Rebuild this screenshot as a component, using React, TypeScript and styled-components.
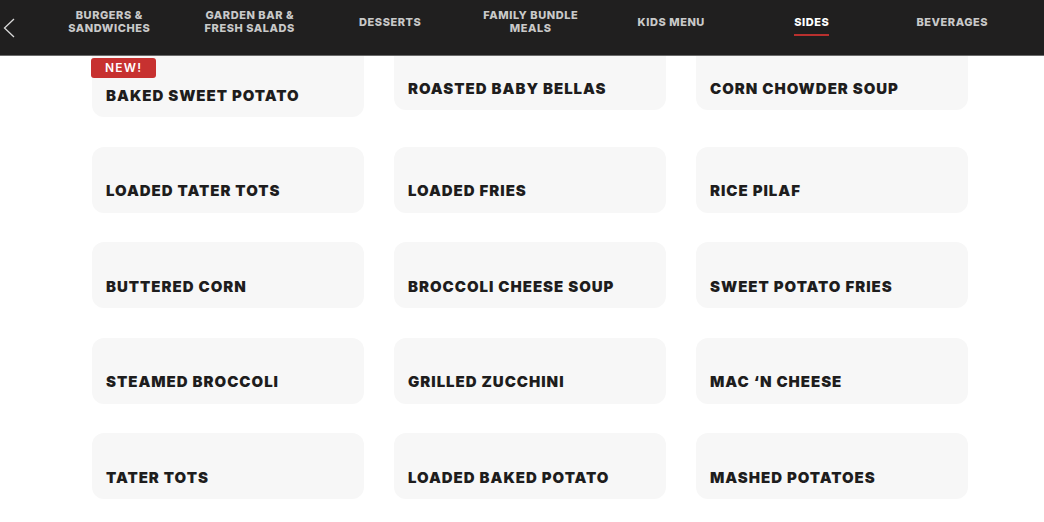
import React from 'react';
import styled, {createGlobalStyle} from 'styled-components';

const FONT = `'Inter', 'Open Sans', 'Liberation Sans', sans-serif`;

const GlobalStyle = createGlobalStyle`
  html, body {
    margin: 0;
    padding: 0;
    background: #fff;
    font-family: ${FONT};
  }
  * {
    box-sizing: border-box;
  }
`;

const Header = styled.header`
  position: fixed;
  top: 0;
  left: 0;
  right: 0;
  height: 56px;
  background: #201f1f;
  border-bottom: 1px solid #6b6b6b;
  display: flex;
  align-items: flex-start;
  z-index: 10;
`;

const Back = styled.button`
  width: 39px;
  height: 55px;
  padding: 0 0 0 3px;
  border: 0;
  background: transparent;
  display: flex;
  align-items: center;
  justify-content: flex-start;
  cursor: pointer;
`;

const Nav = styled.nav`
  display: flex;
  height: 44px;
`;

const NavItem = styled.a<{ active?: boolean }>`
  width: 140.5px;
  display: flex;
  align-items: center;
  justify-content: center;
  position: relative;
  text-align: center;
  font-size: 11px;
  line-height: 13px;
  font-weight: 800;
  letter-spacing: 0.05em;
  text-transform: uppercase;
  color: ${p => (p.active ? '#ffffff' : '#c9c9c9')};
  text-decoration: none;
`;

const Underlined = styled.span`
  position: relative;

  &::after {
    content: '';
    position: absolute;
    left: 0;
    right: 0;
    bottom: -7px;
    height: 2px;
    background: #b8302e;
  }
`;

const Main = styled.main`
  padding: 44px 0 40px 92px;
`;

const Grid = styled.div`
  display: grid;
  grid-template-columns: repeat(3, 272px);
  column-gap: 30px;
  row-gap: 29.5px;
  align-items: start;
`;

const Card = styled.div<{ tall?: boolean }>`
  height: ${p => (p.tall ? 73 : 66)}px;
  background: #f7f7f7;
  border-radius: 12px;
  padding: 0 14px 12.5px;
  display: flex;
  flex-direction: column;
  justify-content: flex-end;
  align-items: flex-start;
  position: relative;
`;

const Badge = styled.span`
  position: absolute;
  top: 14px;
  left: -1px;
  height: 20px;
  padding: 0 14px;
  background: #c73130;
  border-radius: 3px;
  color: #fff;
  font-size: 12px;
  font-weight: 600;
  letter-spacing: 0.1em;
  line-height: 20px;
`;

const Title = styled.span`
  display: block;
  font-size: 15px;
  line-height: 18px;
  font-weight: 900;
  letter-spacing: 0.065em;
  color: #1e1d1d;
  text-transform: uppercase;
`;

const tabs = [
  'Burgers &\nSandwiches',
  'Garden Bar &\nFresh Salads',
  'Desserts',
  'Family Bundle\nMeals',
  'Kids Menu',
  'Sides',
  'Beverages',
];

const items = [
  'Baked Sweet Potato',
  'Roasted Baby Bellas',
  'Corn Chowder Soup',
  'Loaded Tater Tots',
  'Loaded Fries',
  'Rice Pilaf',
  'Buttered Corn',
  'Broccoli Cheese Soup',
  'Sweet Potato Fries',
  'Steamed Broccoli',
  'Grilled Zucchini',
  'Mac ‘N Cheese',
  'Tater Tots',
  'Loaded Baked Potato',
  'Mashed Potatoes',
];

const Lines = ({text}: { text: string }) => (
  <>
    {text.split('\n').map((l, i) => (
      <React.Fragment key={i}>
        {i > 0 && <br/>}
        {l}
      </React.Fragment>
    ))}
  </>
);

export default function App() {
  return (
    <>
      <GlobalStyle/>
      <Header>
        <Back aria-label="Back">
          <svg width="12" height="20" viewBox="0 0 12 20" fill="none">
            <path d="M11 1 L1.5 10 L11 19" stroke="#d9d9d9" strokeWidth="1.3"/>
          </svg>
        </Back>
        <Nav>
          {tabs.map(t => (
            <NavItem key={t} active={t === 'Sides'} href="#">
              {t === 'Sides' ? (
                <Underlined>{t}</Underlined>
              ) : (
                <span><Lines text={t}/></span>
              )}
            </NavItem>
          ))}
        </Nav>
      </Header>
      <Main>
        <Grid>
          {items.map((name, i) => (
            <Card key={name} tall={i === 0}>
              {i === 0 && <Badge>NEW!</Badge>}
              <Title>{name}</Title>
            </Card>
          ))}
        </Grid>
      </Main>
    </>
  );
}
